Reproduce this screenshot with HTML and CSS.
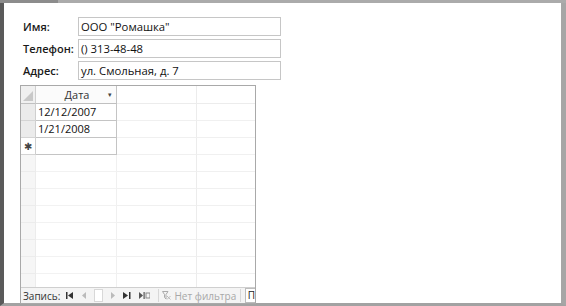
FILE: index.html
```html
<!DOCTYPE html>
<html lang="ru">
<head>
  <meta charset="UTF-8">
  <title>Форма клиента</title>
  <link rel="stylesheet" href="styles.css">
</head>
<body>
  <div class="window">
    <div class="topbar">
      <div class="tab"></div>
      <div class="tab-rest"></div>
    </div>
    <div class="frame">
      <div class="form">
        <div class="field-row">
          <div class="label">Имя:</div>
          <div class="field">ООО "Ромашка"</div>
        </div>
        <div class="field-row">
          <div class="label">Телефон:</div>
          <div class="field">() 313-48-48</div>
        </div>
        <div class="field-row">
          <div class="label">Адрес:</div>
          <div class="field">ул. Смольная, д. 7</div>
        </div>

        <div class="subform">
          <div class="grid">
            <div class="grow head">
              <div class="sel corner"><span class="tri"></span></div>
              <div class="cell date hcell">Дата <span class="arrow">▾</span></div>
              <div class="cell c3"></div>
              <div class="cell c4"></div>
            </div>
            <div class="grow">
              <div class="sel"></div>
              <div class="cell date">12/12/2007</div>
              <div class="cell c3"></div>
              <div class="cell c4"></div>
            </div>
            <div class="grow">
              <div class="sel"></div>
              <div class="cell date">1/21/2008</div>
              <div class="cell c3"></div>
              <div class="cell c4"></div>
            </div>
            <div class="grow">
              <div class="sel star">✱</div>
              <div class="cell date"></div>
              <div class="cell c3"></div>
              <div class="cell c4"></div>
            </div>
            <div class="grow empty"><div class="sel"></div><div class="cell date"></div><div class="cell c3"></div><div class="cell c4"></div></div>
            <div class="grow empty"><div class="sel"></div><div class="cell date"></div><div class="cell c3"></div><div class="cell c4"></div></div>
            <div class="grow empty"><div class="sel"></div><div class="cell date"></div><div class="cell c3"></div><div class="cell c4"></div></div>
            <div class="grow empty"><div class="sel"></div><div class="cell date"></div><div class="cell c3"></div><div class="cell c4"></div></div>
            <div class="grow empty"><div class="sel"></div><div class="cell date"></div><div class="cell c3"></div><div class="cell c4"></div></div>
            <div class="grow empty"><div class="sel"></div><div class="cell date"></div><div class="cell c3"></div><div class="cell c4"></div></div>
            <div class="grow empty"><div class="sel"></div><div class="cell date"></div><div class="cell c3"></div><div class="cell c4"></div></div>
            <div class="grow empty"><div class="sel"></div><div class="cell date"></div><div class="cell c3"></div><div class="cell c4"></div></div>
          </div>
          <div class="nav">
            <span class="nav-label">Запись:</span>
            <span class="nbtn">
              <svg width="8" height="7" viewBox="0 0 8 7"><rect x="0" y="0" width="1.5" height="7" fill="#333"/><path d="M7 0 L2 3.5 L7 7 Z" fill="#333"/></svg>
            </span>
            <span class="nbtn">
              <svg width="5" height="7" viewBox="0 0 5 7"><path d="M4 0 L0 3.5 L4 7 Z" fill="#bbb"/></svg>
            </span>
            <span class="nbox"></span>
            <span class="nbtn">
              <svg width="5" height="7" viewBox="0 0 5 7"><path d="M1 0 L5 3.5 L1 7 Z" fill="#bbb"/></svg>
            </span>
            <span class="nbtn">
              <svg width="8" height="7" viewBox="0 0 8 7"><path d="M0 0 L5 3.5 L0 7 Z" fill="#333"/><rect x="6" y="0" width="1.5" height="7" fill="#333"/></svg>
            </span>
            <span class="nbtn">
              <svg width="11" height="7" viewBox="0 0 11 7"><path d="M0 0 L4 3.5 L0 7 Z" fill="#555"/><rect x="4.5" y="0" width="1.2" height="7" fill="#555"/><rect x="7" y="1" width="4" height="5" fill="none" stroke="#888" stroke-width="1"/></svg>
            </span>
            <span class="nsep"></span>
            <span class="filter">
              <svg width="9" height="9" viewBox="0 0 9 9"><path d="M0.5 0.5 L6 0.5 L4 3.5 L4 8 L2.5 6.5 L2.5 3.5 Z" fill="none" stroke="#aaa" stroke-width="1"/><path d="M5 5 L8.5 8.5 M8.5 5 L5 8.5" stroke="#bbb" stroke-width="1"/></svg>
              Нет фильтра
            </span>
            <span class="nsep"></span>
            <span class="search">П</span>
          </div>
        </div>
      </div>
    </div>
  </div>
</body>
</html>
```

FILE: styles.css
```css
html, body {
  margin: 0;
  padding: 0;
  background: #fff;
}
body {
  font-family: "Open Sans", "Noto Sans", Arial, sans-serif;
  color: #111;
}
.window {
  width: 566px;
  height: 306px;
  box-sizing: border-box;
  display: flex;
  flex-direction: column;
  background: #a8a8a8;
}
.topbar {
  display: flex;
  height: 3px;
  flex: none;
}
.tab {
  width: 58px;
  background: #8c8c8c;
}
.tab-rest {
  flex: 1;
  background: #ababab;
}
.frame {
  flex: 1;
  display: flex;
  border-left: 4px solid #5a5a5a;
  border-right: 5px solid #a6a6a6;
  border-bottom: 3px solid #a2a2a2;
  background: #fff;
  min-height: 0;
}
.form {
  flex: 1;
  padding: 14px 0 0 16px;
  display: flex;
  flex-direction: column;
  gap: 3px;
}
.field-row {
  display: flex;
  align-items: center;
  height: 19px;
}
.label {
  width: 55px;
  padding-left: 3px;
  font-size: 11px;
  font-weight: 600;
  color: #1a1a1a;
}
.field {
  width: 199px;
  height: 17px;
  border: 1px solid #c6c6c6;
  font-size: 11.3px;
  line-height: 17px;
  padding-left: 2px;
  color: #111;
}
.subform {
  margin-top: 2px;
  width: 234px;
  height: 217px;
  border: 1px solid #a9a9a9;
  display: flex;
  flex-direction: column;
  background: #fff;
}
.grid {
  flex: 1;
  overflow: hidden;
}
.grow {
  display: flex;
  height: 17px;
}
.grow.head {
  height: 18px;
}
.sel {
  width: 15px;
  flex: none;
  background: #ebebeb;
  border-right: 1px solid #cfcfcf;
  border-bottom: 1px solid #d4d4d4;
  box-sizing: border-box;
}
.corner {
  background: #f0f0f0;
  position: relative;
  border-bottom: 1px solid #c0c0c0;
}
.tri {
  position: absolute;
  right: 2px;
  bottom: 2px;
  width: 0;
  height: 0;
  border-left: 10px solid transparent;
  border-bottom: 10px solid #c8c8c8;
}
.star {
  background: #fff;
  font-size: 10px;
  line-height: 16px;
  text-align: center;
  color: #444;
}
.cell {
  box-sizing: border-box;
  border-right: 1px solid #d0d0d0;
  border-bottom: 1px solid #d0d0d0;
  font-size: 11px;
  line-height: 16px;
  padding-left: 2px;
  color: #111;
}
.date {
  width: 81px;
  flex: none;
  border-right-color: #c4c4c4;
  border-bottom-color: #c4c4c4;
}
.c3 {
  width: 80px;
  flex: none;
  border-right-color: #ececec;
  border-bottom-color: #f0f0f0;
}
.c4 {
  flex: 1;
  border-right: none;
  border-bottom-color: #f0f0f0;
}
.head .cell {
  background: #fbfbfb;
  border-bottom-color: #c0c0c0;
  line-height: 17px;
}
.head .c3, .head .c4 {
  background: #fff;
  border-bottom-color: #ececec;
}
.hcell {
  text-align: center;
  color: #333;
  position: relative;
}
.arrow {
  position: absolute;
  right: 4px;
  top: 0;
  font-size: 7px;
  color: #444;
}
.empty .sel {
  background: #f6f6f6;
  border-right-color: #ececec;
  border-bottom-color: #ececec;
}
.empty .date {
  border-right-color: #f0f0f0;
  border-bottom-color: #f2f2f2;
}
.nav {
  height: 15px;
  flex: none;
  border-top: 1px solid #cfcfcf;
  background: #f4f4f4;
  display: flex;
  align-items: center;
  font-size: 10px;
  color: #333;
  padding-left: 2px;
  white-space: nowrap;
  overflow: hidden;
}
.nav-label {
  margin-right: 2px;
}
.nbtn {
  display: flex;
  align-items: center;
  margin: 0 4px;
}
.nbox {
  width: 16px;
  height: 13px;
  background: #fff;
  border: 1px solid #d8d8d8;
  box-sizing: border-box;
  margin: 0 3px;
}
.nsep {
  width: 1px;
  height: 13px;
  background: #d8d8d8;
  margin: 0 4px;
}
.filter {
  display: flex;
  align-items: center;
  gap: 3px;
  color: #a8a8a8;
}
.search {
  flex: 1;
  height: 13px;
  background: #fff;
  border: 1px solid #bdbdbd;
  border-right: none;
  line-height: 12px;
  padding-left: 2px;
  color: #222;
}
```
